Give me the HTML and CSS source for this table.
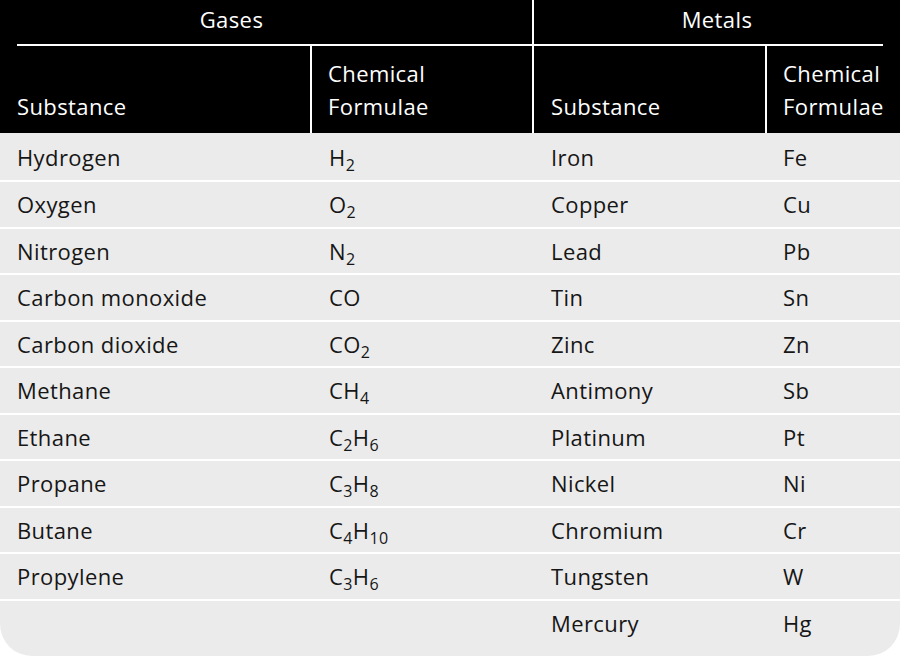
FILE: index.html
```html
<!DOCTYPE html>
<html lang="en">
<head>
<meta charset="utf-8">
<title>Gases and Metals</title>
<link rel="stylesheet" href="styles.css">
</head>
<body>
<div class="table">
  <div class="head">
    <div class="half gases">
      <div class="group-title">Gases</div>
      <div class="rule"></div>
      <div class="sub">
        <div class="hcell c1">Substance</div>
        <div class="hcell c2">Chemical<br>Formulae</div>
      </div>
    </div>
    <div class="half metals">
      <div class="group-title">Metals</div>
      <div class="rule"></div>
      <div class="sub">
        <div class="hcell c3">Substance</div>
        <div class="hcell c4">Chemical<br>Formulae</div>
      </div>
    </div>
  </div>
  <div class="body">
    <div class="row"><span>Hydrogen</span><span>H<sub>2</sub></span><span>Iron</span><span>Fe</span></div>
    <div class="row"><span>Oxygen</span><span>O<sub>2</sub></span><span>Copper</span><span>Cu</span></div>
    <div class="row"><span>Nitrogen</span><span>N<sub>2</sub></span><span>Lead</span><span>Pb</span></div>
    <div class="row"><span>Carbon monoxide</span><span>CO</span><span>Tin</span><span>Sn</span></div>
    <div class="row"><span>Carbon dioxide</span><span>CO<sub>2</sub></span><span>Zinc</span><span>Zn</span></div>
    <div class="row"><span>Methane</span><span>CH<sub>4</sub></span><span>Antimony</span><span>Sb</span></div>
    <div class="row"><span>Ethane</span><span>C<sub>2</sub>H<sub>6</sub></span><span>Platinum</span><span>Pt</span></div>
    <div class="row"><span>Propane</span><span>C<sub>3</sub>H<sub>8</sub></span><span>Nickel</span><span>Ni</span></div>
    <div class="row"><span>Butane</span><span>C<sub>4</sub>H<sub>10</sub></span><span>Chromium</span><span>Cr</span></div>
    <div class="row"><span>Propylene</span><span>C<sub>3</sub>H<sub>6</sub></span><span>Tungsten</span><span>W</span></div>
    <div class="row"><span></span><span></span><span>Mercury</span><span>Hg</span></div>
  </div>
</div>
</body>
</html>
```

FILE: styles.css
```css
html, body {
  margin: 0;
  padding: 0;
  background: #ffffff;
}

body {
  font-family: "Open Sans", "Liberation Sans", sans-serif;
  font-size: 22px;
  letter-spacing: 0.4px;
  color: #161616;
}

.table {
  width: 900px;
  background: #ebebeb;
  border-radius: 0 0 32px 32px;
  padding-bottom: 11px;
}

.head {
  display: flex;
  background: #000;
  color: #fff;
  height: 133px;
}

.half {
  display: flex;
  flex-direction: column;
}

.gases {
  width: 532px;
  border-right: 2px solid #fff;
}

.metals {
  flex: 1;
}

.group-title {
  height: 44px;
  line-height: 38px;
  text-align: center;
}

.gases .group-title {
  padding: 0 86px 0 17px;
}

.metals .group-title {
  padding: 0 17px 0 17px;
}

.rule {
  height: 2px;
  background: #fff;
}

.gases .rule {
  margin-left: 17px;
}

.metals .rule {
  margin-right: 17px;
}

.sub {
  flex: 1;
  display: flex;
}

.hcell {
  display: flex;
  align-items: flex-end;
  padding: 0 0 10px 17px;
  line-height: 33px;
}

.c1 {
  width: 293px;
  border-right: 2px solid #fff;
}

.c3 {
  width: 214px;
  border-right: 2px solid #fff;
}

.c2, .c4 {
  flex: 1;
  padding-left: 16px;
}

.row {
  display: grid;
  grid-template-columns: 312px 222px 233px 133px;
  height: 46.5px;
  box-sizing: border-box;
  border-top: 2px solid #fff;
  align-items: center;
}

.row:first-child {
  border-top: none;
  height: 47px;
}

.row span {
  padding-left: 17px;
}

.row span:last-child {
  padding-left: 16px;
}

sub {
  font-size: 16px;
  vertical-align: -5px;
  line-height: 0;
}
```
